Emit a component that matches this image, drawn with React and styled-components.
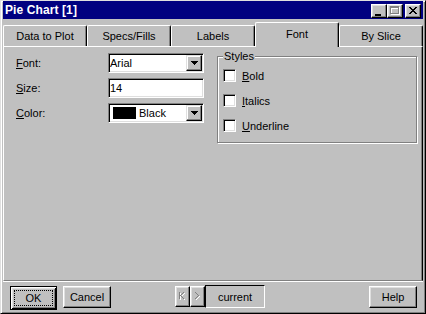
import React from 'react';
import styled, { createGlobalStyle } from 'styled-components';

const Global = createGlobalStyle`
  html, body { margin: 0; padding: 0; background: #c0c0c0; }
  body { font-family: "Liberation Sans", Arial, sans-serif; font-size: 11px; color: #000; }
  * { box-sizing: border-box; }
`;

const Window = styled.div`
  width: 426px;
  height: 314px;
  background: #c0c0c0;
  border: 1px solid;
  border-color: #dfdfdf #000 #000 #dfdfdf;
  box-shadow: inset 1px 1px #fff, inset -1px -1px #808080;
  padding: 0 2px 2px 2px;
  display: flex;
  flex-direction: column;
`;

const TitleBar = styled.div`
  height: 18px;
  background: #000080;
  display: flex;
  align-items: center;
  padding: 0 2px;
  flex-shrink: 0;
`;

const TitleText = styled.div`
  color: #fff;
  font-weight: bold;
  font-size: 12px;
  letter-spacing: 0.1px;
`;

const TitleButtons = styled.div`
  margin-left: auto;
  display: flex;
  align-self: flex-end;
  margin-bottom: 1px;
`;

const TitleButton = styled.div`
  width: 16px;
  height: 14px;
  margin-left: ${p => (p.$gap ? 2 : 0)}px;
  background: #c0c0c0;
  border: 1px solid;
  border-color: #fff #000 #000 #fff;
  box-shadow: inset -1px -1px #808080, inset 1px 1px #dfdfdf;
  position: relative;
  svg { position: absolute; left: 2px; top: 1px; }
`;

const TabRow = styled.div`
  display: flex;
  align-items: flex-end;
  height: 24px;
  margin-top: 3px;
  position: relative;
  z-index: 1;
  flex-shrink: 0;
`;

const Tab = styled.div`
  flex: 1;
  height: ${p => (p.$active ? 25 : 21)}px;
  margin-bottom: ${p => (p.$active ? -1 : 0)}px;
  padding-bottom: ${p => (p.$active ? 3 : 0)}px;
  background: #c0c0c0;
  border-top: 1px solid #fff;
  border-left: 1px solid #fff;
  border-right: 1px solid #000;
  border-radius: 2px 2px 0 0;
  box-shadow: inset -1px 0 #808080;
  display: flex;
  align-items: center;
  justify-content: center;
`;

const Panel = styled.div`
  height: 235px;
  flex-shrink: 0;
  border-top: 1px solid #fff;
  border-left: 1px solid #fff;
  border-right: 1px solid #000;
  border-bottom: 1px solid #808080;
  box-shadow: inset -1px 0 #808080;
  padding: 6px 0 0 12px;
  display: flex;
  align-items: flex-start;
  gap: 13px;
`;

const FormGrid = styled.div`
  display: grid;
  grid-template-columns: 92px 96px;
  grid-auto-rows: 20px;
  row-gap: 5px;
  align-items: center;
`;

const Label = styled.div`
  u { text-decoration: underline; text-underline-offset: 1px; }
`;

const Field = styled.div`
  height: 20px;
  background: #fff;
  border: 1px solid;
  border-color: #808080 #fff #fff #808080;
  box-shadow: inset 1px 1px #000, inset -1px -1px #dfdfdf;
  display: flex;
  align-items: center;
  padding: 0 1px 0 ${p => (p.$swatch ? 4 : 1)}px;
`;

const FieldText = styled.span`
  flex: 1;
  white-space: nowrap;
`;

const Swatch = styled.span`
  width: 23px;
  height: 12px;
  background: ${p => p.$color};
  margin-right: 3px;
  flex-shrink: 0;
`;

const DropButton = styled.span`
  width: 16px;
  height: 16px;
  flex-shrink: 0;
  background: #c0c0c0;
  border: 1px solid;
  border-color: #dfdfdf #000 #000 #dfdfdf;
  box-shadow: inset -1px -1px #808080, inset 1px 1px #fff;
  display: flex;
  align-items: center;
  justify-content: center;
`;

const Group = styled.fieldset`
  margin: -3px 0 0 0;
  width: 200px;
  height: 93px;
  padding: 7px 4px 0 5px;
  border: 1px solid #808080;
  box-shadow: inset 1px 1px #fff, 1px 1px #fff;
  display: flex;
  flex-direction: column;
  gap: 12px;
  min-inline-size: 0;
`;

const Legend = styled.legend`
  padding: 0 1px;
  line-height: 12px;
  background: #c0c0c0;
`;

const CheckRow = styled.label`
  display: flex;
  align-items: center;
  gap: 6px;
  height: 13px;
  u { text-underline-offset: 1px; }
`;

const CheckBox = styled.span`
  width: 13px;
  height: 13px;
  flex-shrink: 0;
  background: #fff;
  border: 1px solid;
  border-color: #808080 #fff #fff #808080;
  box-shadow: inset 1px 1px #000, inset -1px -1px #dfdfdf;
`;

const Footer = styled.div`
  flex: 1;
  border-top: 1px solid #fff;
  display: flex;
  align-items: flex-start;
  padding: 4px 6px 0 7px;
`;

const Button = styled.div`
  width: ${p => p.$w}px;
  height: ${p => p.$h || 22}px;
  margin-left: ${p => p.$ml || 0}px;
  background: #c0c0c0;
  border: 1px solid;
  border-color: #fff #000 #000 #fff;
  box-shadow: inset -1px -1px #808080, inset 1px 1px #dfdfdf;
  display: flex;
  align-items: center;
  justify-content: center;
`;

const DefaultButton = styled.div`
  width: ${p => p.$w}px;
  height: ${p => p.$h}px;
  background: #c0c0c0;
  border: 1px solid #000;
  box-shadow: inset 1px 1px #fff, inset -1px -1px #000, inset 2px 2px #dfdfdf, inset -2px -2px #808080;
  padding: 3px;
  display: flex;
`;

const FocusRing = styled.div`
  flex: 1;
  border: 1px dotted #000;
  display: flex;
  align-items: center;
  justify-content: center;
`;

const NavGroup = styled.div`
  display: flex;
  align-items: flex-start;
  margin-left: 64px;
  margin-top: -1px;
`;

const NavButton = styled.div`
  width: 15px;
  height: 21px;
  margin-top: 1px;
  background: #c0c0c0;
  border: 1px solid;
  border-color: #fff #000 #000 #fff;
  box-shadow: inset -1px -1px #808080, inset 1px 1px #dfdfdf;
  display: flex;
  align-items: center;
  justify-content: center;
`;

const Current = styled.div`
  width: 60px;
  height: 23px;
  border: 1px solid;
  border-color: #000 #fff #fff #000;
  display: flex;
  align-items: center;
  justify-content: center;
`;

const Spacer = styled.div`
  flex: 1;
`;

const pixels = (rows, color) =>
  rows.flatMap((row, y) =>
    row.split('').map((c, x) =>
      c === '#' ? <rect key={`${x}-${y}`} x={x} y={y} width="1" height="1" fill={color} /> : null
    )
  );

const CloseIcon = () => (
  <svg width="10" height="10" viewBox="0 0 10 10" shapeRendering="crispEdges" style={{ left: 3, top: 2 }}>
    {pixels(['##....##', '.##..##.', '..####..', '...##...', '..####..', '.##..##.', '##....##'], '#000')}
  </svg>
);

const MinIcon = () => (
  <svg width="10" height="10" viewBox="0 0 10 10" shapeRendering="crispEdges" style={{ left: 2, top: 1 }}>
    <rect x="1" y="8" width="6" height="2" fill="#000" />
  </svg>
);

const MaxIcon = () => (
  <svg width="11" height="10" viewBox="0 0 11 10" shapeRendering="crispEdges" style={{ left: 2, top: 1 }}>
    <g transform="translate(1,1)" fill="#fff">
      <rect x="0" y="0" width="9" height="2" />
      <rect x="0" y="0" width="1" height="8" />
      <rect x="8" y="0" width="1" height="8" />
      <rect x="0" y="7" width="9" height="1" />
    </g>
    <g fill="#808080">
      <rect x="0" y="0" width="9" height="2" />
      <rect x="0" y="0" width="1" height="8" />
      <rect x="8" y="0" width="1" height="8" />
      <rect x="0" y="7" width="9" height="1" />
    </g>
  </svg>
);

const DownArrow = () => (
  <svg width="7" height="4" viewBox="0 0 7 4" shapeRendering="crispEdges">
    <rect x="0" y="0" width="7" height="1" fill="#000" />
    <rect x="1" y="1" width="5" height="1" fill="#000" />
    <rect x="2" y="2" width="3" height="1" fill="#000" />
    <rect x="3" y="3" width="1" height="1" fill="#000" />
  </svg>
);

const FirstGlyph = () => (
  <svg width="7" height="10" viewBox="0 0 7 10" shapeRendering="crispEdges">
    <g transform="translate(1,1)">
      {pixels(['#...#', '#..#.', '#.#..', '##...', '#.#..', '#..#.', '#...#'], '#fff')}
    </g>
    {pixels(['#...#', '#..#.', '#.#..', '##...', '#.#..', '#..#.', '#...#'], '#808080')}
  </svg>
);

const NextGlyph = () => (
  <svg width="6" height="10" viewBox="0 0 6 10" shapeRendering="crispEdges">
    <g transform="translate(1,1)">
      {pixels(['#...', '.#..', '..#.', '...#', '..#.', '.#..', '#...'], '#fff')}
    </g>
    {pixels(['#...', '.#..', '..#.', '...#', '..#.', '.#..', '#...'], '#808080')}
  </svg>
);

const tabs = ['Data to Plot', 'Specs/Fills', 'Labels', 'Font', 'By Slice'];

export default function App() {
  return (
    <>
      <Global />
      <Window>
        <TitleBar>
          <TitleText>Pie Chart [1]</TitleText>
          <TitleButtons>
            <TitleButton><MinIcon /></TitleButton>
            <TitleButton><MaxIcon /></TitleButton>
            <TitleButton $gap><CloseIcon /></TitleButton>
          </TitleButtons>
        </TitleBar>
        <TabRow>
          {tabs.map(t => (
            <Tab key={t} $active={t === 'Font'}>{t}</Tab>
          ))}
        </TabRow>
        <Panel>
          <FormGrid>
            <Label><u>F</u>ont:</Label>
            <Field>
              <FieldText>Arial</FieldText>
              <DropButton><DownArrow /></DropButton>
            </Field>
            <Label><u>S</u>ize:</Label>
            <Field>
              <FieldText>14</FieldText>
            </Field>
            <Label><u>C</u>olor:</Label>
            <Field $swatch>
              <Swatch $color="#000" />
              <FieldText>Black</FieldText>
              <DropButton><DownArrow /></DropButton>
            </Field>
          </FormGrid>
          <Group>
            <Legend>Styles</Legend>
            <CheckRow><CheckBox /><span><u>B</u>old</span></CheckRow>
            <CheckRow><CheckBox /><span><u>I</u>talics</span></CheckRow>
            <CheckRow><CheckBox /><span><u>U</u>nderline</span></CheckRow>
          </Group>
        </Panel>
        <Footer>
          <DefaultButton $w={47} $h={24}>
            <FocusRing>OK</FocusRing>
          </DefaultButton>
          <Button $w={48} $h={22} $ml={6}>Cancel</Button>
          <NavGroup>
            <NavButton><FirstGlyph /></NavButton>
            <NavButton><NextGlyph /></NavButton>
            <Current>current</Current>
          </NavGroup>
          <Spacer />
          <Button $w={48} $h={22}>Help</Button>
        </Footer>
      </Window>
    </>
  );
}
